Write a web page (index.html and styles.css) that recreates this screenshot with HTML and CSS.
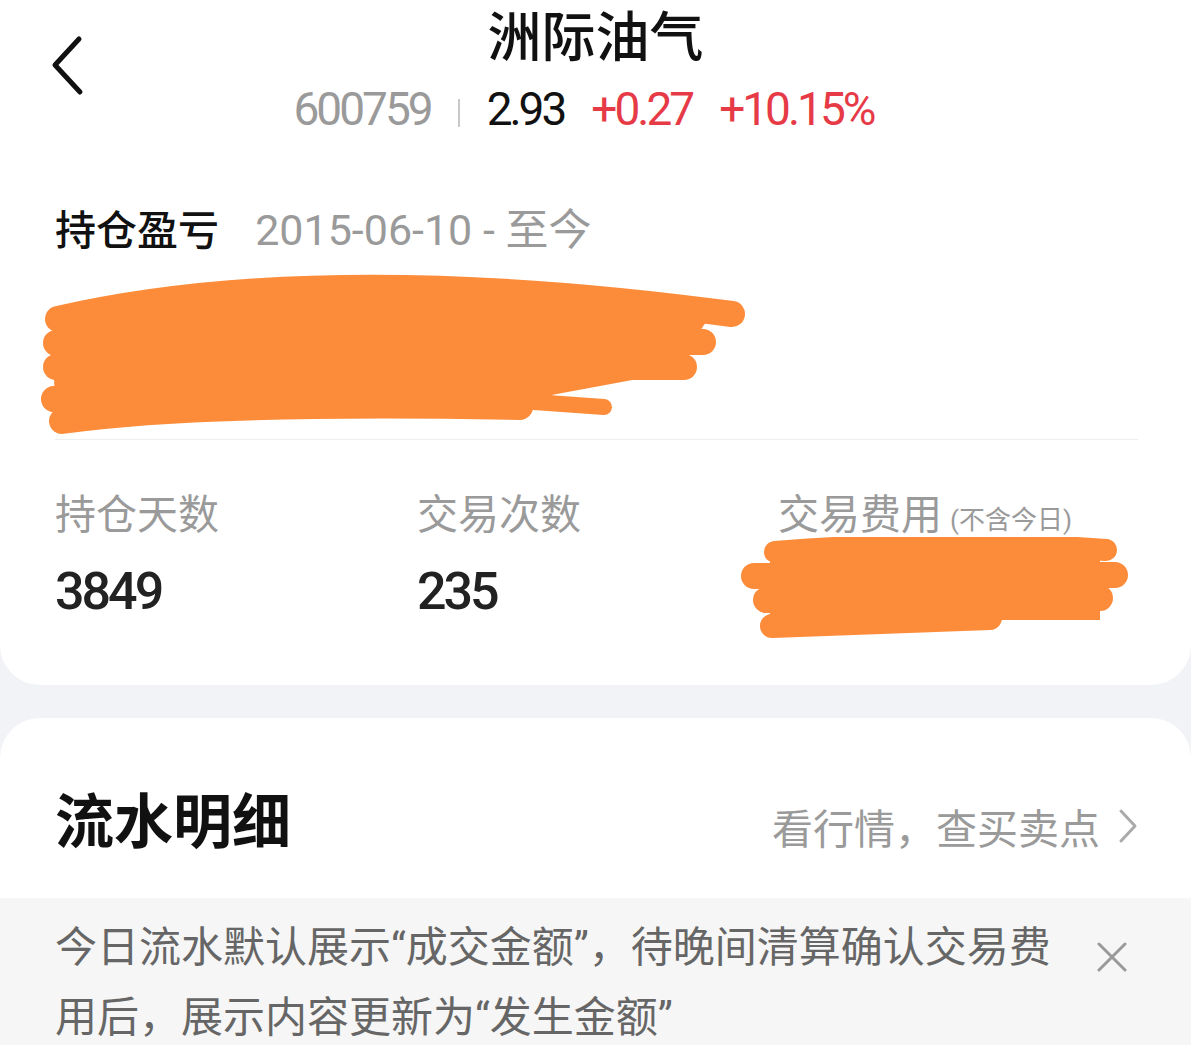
FILE: index.html
```html
<!doctype html>
<html lang="zh-CN">
  <head>
    <meta charset="UTF-8" />
    <meta name="viewport" content="width=device-width, initial-scale=1.0" />
    <title>洲际油气 持仓盈亏</title>
    <link rel="stylesheet" href="styles.css">
  </head>
  <body>
    <div class="card card-top">
      <!-- 顶部标题栏 -->
      <header class="header">
        <a class="back" href="#">
          <svg width="36" height="64" viewBox="0 0 36 64">
            <path d="M29 5 L5 31 L30 58" fill="none" stroke="#111" stroke-width="5" stroke-linecap="round" stroke-linejoin="round" />
          </svg>
        </a>
        <h1 class="stock-name">洲际油气</h1>
        <div class="quote">
          <span class="code">600759</span>
          <span class="sep"></span>
          <span class="price">2.93</span>
          <span class="up">+0.27</span>
          <span class="up">+10.15%</span>
        </div>
      </header>

      <!-- 持仓盈亏 -->
      <div class="profit">
        <div class="profit-title">
          <span class="label">持仓盈亏</span>
          <span class="range">2015-06-10 - 至今</span>
        </div>
        <svg class="mask" width="720" height="176" viewBox="38 262 720 176">
          <path d="M52 330 Q300 255 720 300 L690 345 L670 372 L530 398 L56 424 Z" fill="#fc8c3a" />
          <g fill="none" stroke="#fc8c3a" stroke-linecap="round" stroke-linejoin="round">
            <path d="M58 318 Q320 258 732 313" stroke-width="26" />
            <path d="M56 342 L703 341" stroke-width="26" />
            <path d="M56 366 L684 366" stroke-width="26" />
            <path d="M54 398 Q300 386 540 390" stroke-width="26" />
            <path d="M520 400 L604 406" stroke-width="16" />
            <path d="M62 420 Q200 400 520 406" stroke-width="26" />
          </g>
        </svg>
      </div>

      <div class="stats">
        <div class="stat">
          <div class="stat-label">持仓天数</div>
          <div class="stat-value">3849</div>
        </div>
        <div class="stat">
          <div class="stat-label">交易次数</div>
          <div class="stat-value">235</div>
        </div>
        <div class="stat">
          <div class="stat-label">交易费用<small>(不含今日)</small></div>
          <svg class="fee-mask" width="390" height="105" viewBox="740 535 390 105">
            <g fill="none" stroke="#fc8c3a" stroke-linecap="round">
              <path d="M775 550 Q950 536 1106 548" stroke-width="22" />
              <path d="M754 574 L1115 573" stroke-width="26" />
              <path d="M766 598 L1100 596" stroke-width="26" />
              <path d="M772 624 L990 616" stroke-width="24" />
            </g>
            <rect x="770" y="548" width="330" height="70" fill="#fc8c3a" />
          </svg>
        </div>
      </div>
    </div>

    <div class="card card-bottom">
      <div class="flow-head">
        <h2>流水明细</h2>
        <a class="more" href="#">
          看行情，查买卖点
          <svg width="20" height="36" viewBox="0 0 20 36">
            <path d="M3 3 L17 18 L3 33" fill="none" stroke="#aaa" stroke-width="3" stroke-linecap="round" stroke-linejoin="round" />
          </svg>
        </a>
      </div>
      <div class="notice">
        <p>今日流水默认展示“成交金额”，待晚间清算确认交易费用后，展示内容更新为“发生金额”</p>
        <svg class="close" width="30" height="30" viewBox="0 0 30 30">
          <path d="M2 2 L28 28 M28 2 L2 28" fill="none" stroke="#999" stroke-width="3" stroke-linecap="round" />
        </svg>
      </div>
    </div>
  </body>
</html>
```

FILE: styles.css
```css
body {
  margin: 0;
  background-color: #f2f3f7;
  font-family: Roboto, 'Noto Sans CJK SC', sans-serif;
  color: #111;
}

.card {
  background-color: #fff;
}

.card-top {
  border-radius: 0 0 40px 40px;
  padding: 0 53px 63px 55px;
}

.card-bottom {
  margin-top: 33px;
  border-radius: 40px 40px 0 0;
  overflow: hidden;
}

/* 标题栏 */
.header {
  display: grid;
  grid-template-columns: 1fr auto 1fr;
  margin: 0 -53px 0 -55px;
  padding-top: 7px;
}

.back {
  grid-column: 1;
  grid-row: 1 / 3;
  padding: 27px 0 0 50px;
}

.stock-name {
  grid-column: 2;
  grid-row: 1;
  margin: 0;
  font-size: 54px;
  line-height: 64px;
  font-weight: 500;
  text-align: center;
  color: #111;
}

.quote {
  grid-column: 2;
  grid-row: 2;
  display: flex;
  align-items: center;
  gap: 27px;
  margin-top: 13px;
  padding-right: 24px;
  font-size: 46px;
  line-height: 50px;
  letter-spacing: -3px;
}

.code {
  color: #9a9a9a;
}

.sep {
  width: 2px;
  height: 28px;
  margin-top: 8px;
  background-color: #c8c8c8;
}

.price {
  color: #111;
}

.up {
  color: #e63a47;
}

/* 持仓盈亏 */
.profit {
  margin-top: 68px;
  border-bottom: 1px solid #eeeeee;
}

.profit-title {
  font-size: 41px;
  line-height: 56px;
}

.profit-title .label {
  font-weight: 500;
  color: #111;
}

.profit-title .range {
  margin-left: 26px;
  font-size: 43px;
  color: #9a9a9a;
}

.mask {
  display: block;
  margin: 4px 0 0 -17px;
}

.stats {
  display: grid;
  grid-template-columns: 362px 361px 1fr;
  margin-top: 47px;
}

.stat {
  position: relative;
}

.stat-label {
  font-size: 41px;
  line-height: 56px;
  color: #9a9a9a;
}

.stat-label small {
  margin-left: 8px;
  font-size: 26px;
}

.stat-value {
  margin-top: 19px;
  font-size: 52px;
  line-height: 60px;
  font-weight: 500;
  letter-spacing: -3px;
  color: #222;
}

.fee-mask {
  position: absolute;
  left: -38px;
  top: 50px;
}

/* 流水明细 */
.flow-head {
  display: flex;
  justify-content: space-between;
  align-items: center;
  padding: 69px 53px 39px 55px;
}

.flow-head h2 {
  margin: 0;
  font-size: 59px;
  line-height: 72px;
  font-weight: 700;
  color: #111;
}

.more {
  display: flex;
  align-items: center;
  gap: 18px;
  margin-top: 6px;
  font-size: 41px;
  color: #9a9a9a;
  text-decoration: none;
}

.notice {
  display: flex;
  align-items: flex-start;
  padding: 15px 64px 20px 55px;
  background-color: #f6f6f6;
}

.notice p {
  flex: 1;
  margin: 0;
  font-size: 42px;
  line-height: 70px;
  color: #666;
}

.close {
  flex-shrink: 0;
  margin: 29px 0 0 22px;
}
```
